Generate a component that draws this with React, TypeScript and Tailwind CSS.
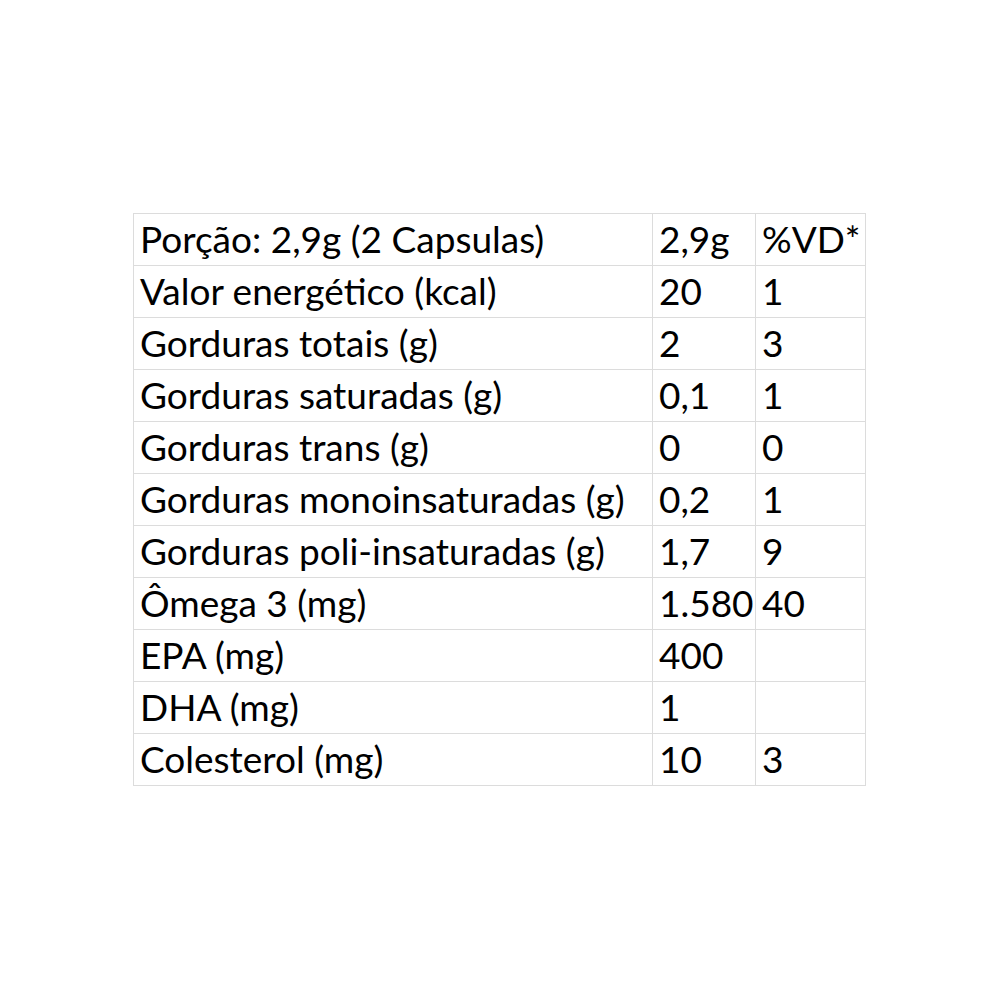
const rows: [string, string, string][] = [
  ["Porção: 2,9g (2 Capsulas)", "2,9g", "%VD*"],
  ["Valor energético (kcal)", "20", "1"],
  ["Gorduras totais (g)", "2", "3"],
  ["Gorduras saturadas (g)", "0,1", "1"],
  ["Gorduras trans (g)", "0", "0"],
  ["Gorduras monoinsaturadas (g)", "0,2", "1"],
  ["Gorduras poli-insaturadas (g)", "1,7", "9"],
  ["Ômega 3 (mg)", "1.580", "40"],
  ["EPA (mg)", "400", ""],
  ["DHA (mg)", "1", ""],
  ["Colesterol (mg)", "10", "3"],
];

export default function App() {
  return (
    <div className="w-[1000px] h-[1000px] bg-white pt-[213px] pl-[133px]">
      <div
        className="grid grid-cols-[519px_103px_110px] w-[733px] border-l border-t border-[#dcdcdc] text-black text-[37px] leading-none"
        style={{ fontFamily: "Lato, 'Open Sans', sans-serif" }}
      >
        {rows.map((r, i) =>
          r.map((cell, j) => (
            <div
              key={i + "-" + j}
              className="h-[52px] border-r border-b border-[#dcdcdc] flex items-end pl-[6px] pb-[8px] whitespace-nowrap overflow-hidden"
            >
              {cell}
            </div>
          ))
        )}
      </div>
    </div>
  );
}
